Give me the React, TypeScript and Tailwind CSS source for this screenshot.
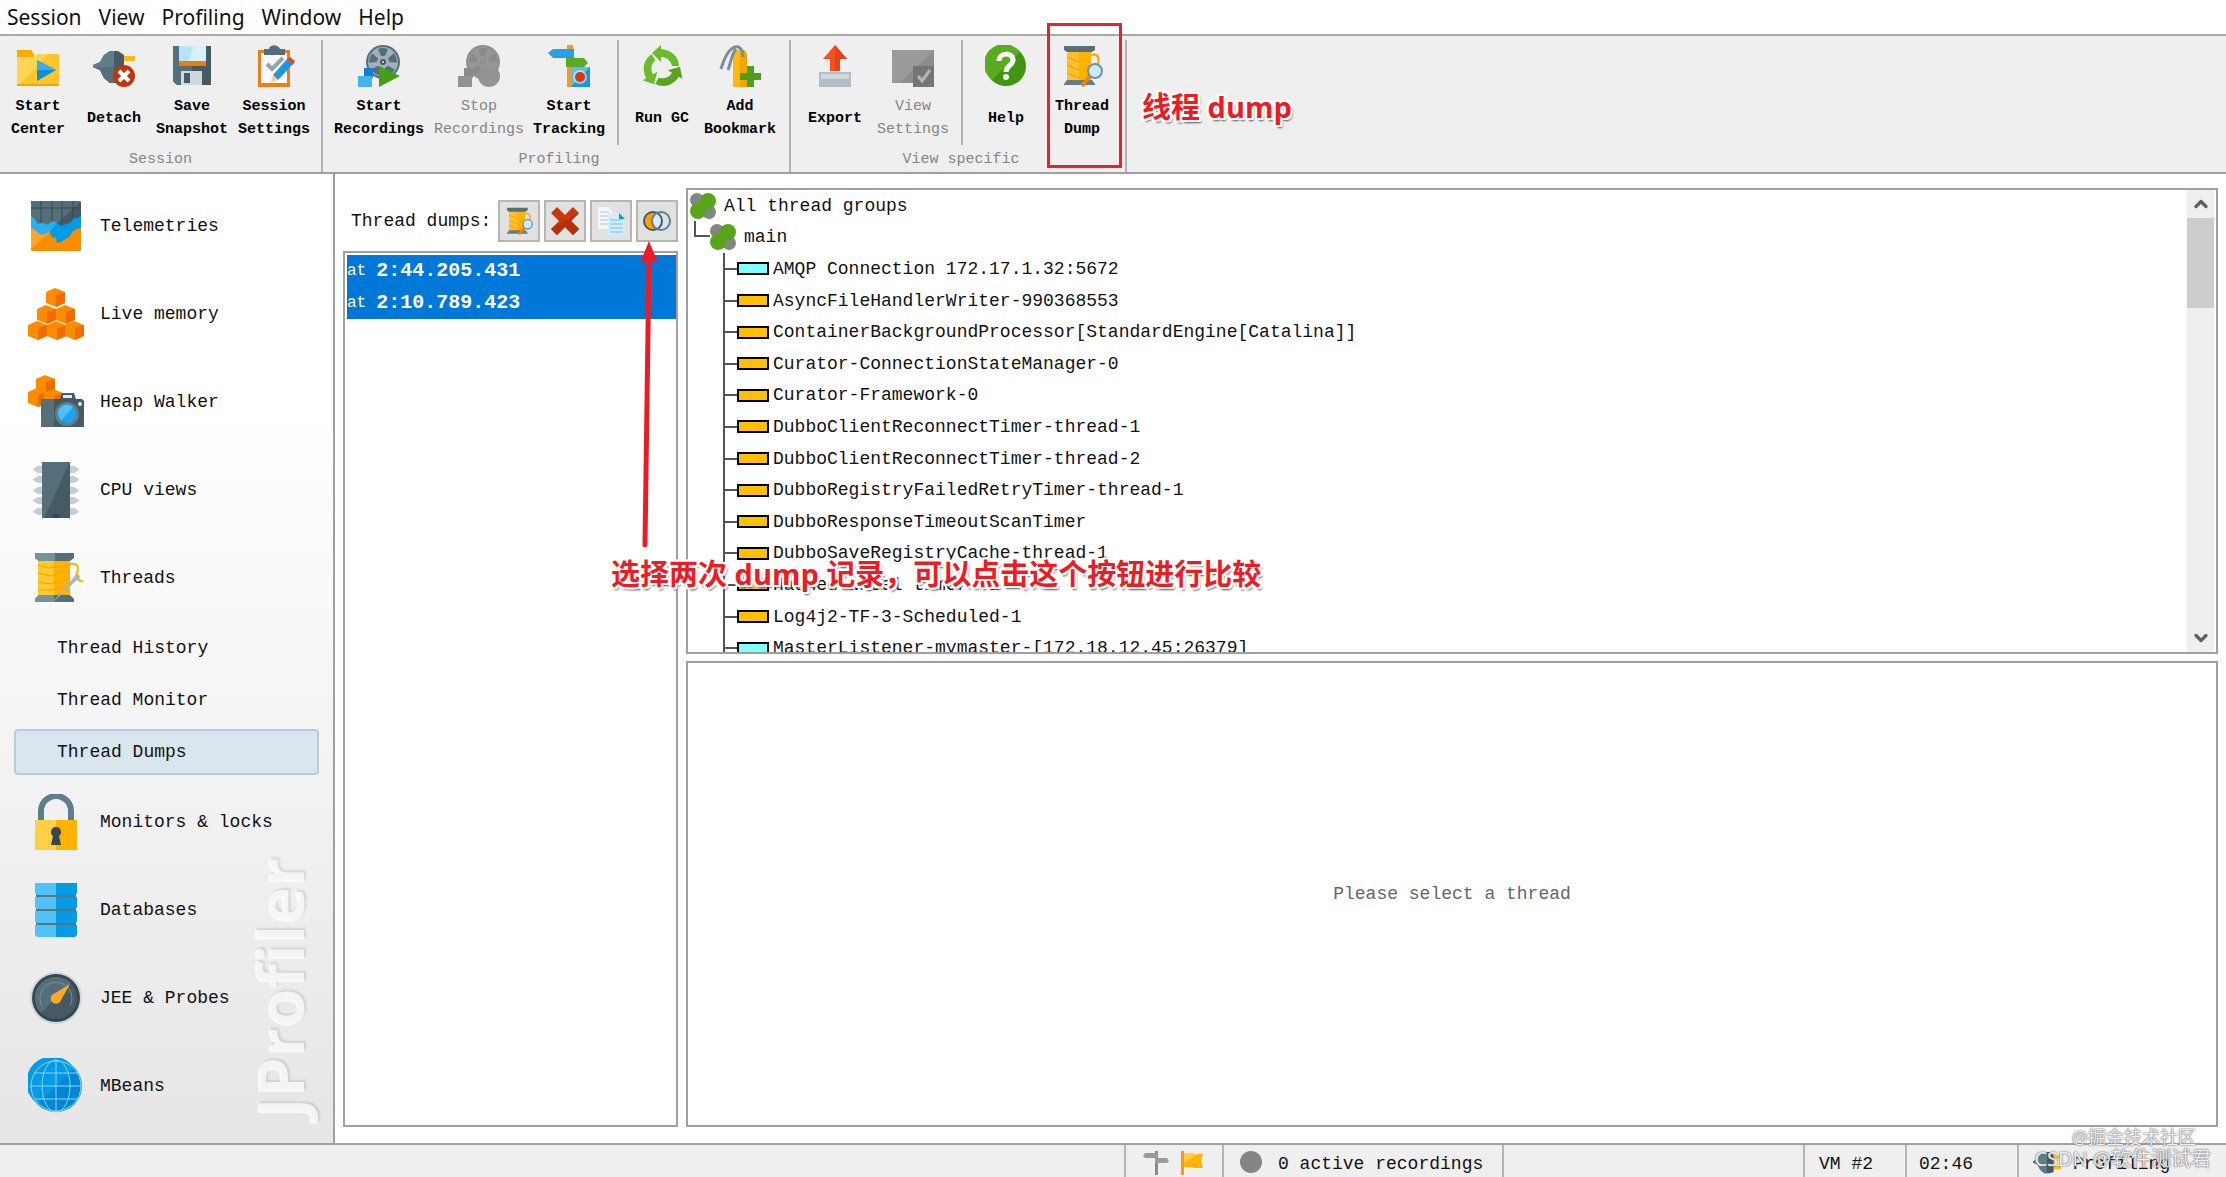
import React, { useState } from 'react';
import { ChevronUp, ChevronDown } from 'lucide-react';

/* ---------- toolbar icons ---------- */

const FolderPlay = () => (
  <svg viewBox="0 0 42 42" className="h-[42px] w-[42px]">
    <path d="M0 5h14l3 4v4H0z" fill="#f9ab00" />
    <path d="M0 12h17l3-3h22v31H0z" fill="#ffc629" />
    <path d="M0 12h17l3-3h11L3 40H0z" fill="#ffd557" />
    <path d="M0 39h42v2H0z" fill="#f0a800" />
    <path d="M20 15l19 10-19 11z" fill="#0a8fdb" />
    <path d="M20 15l19 10H20z" fill="#3badea" />
  </svg>
);

const Plug = () => (
  <svg viewBox="0 0 42 42" className="h-[42px] w-[42px]">
    <path d="M31 11h11v5H31z" fill="#fbb917" />
    <path d="M0 20l7-3 4-7 6-4h8l6 4v26l-6 2h-8l-6-5-4-8-7-3z" fill="#455a64" />
    <path d="M0 20l7-3 4-7 6-4h4v32h-4l-6-5-4-8-7-3z" fill="#607d8b" />
    <path d="M0 22h21v16h-4l-6-5-4-8-7-3z" fill="#546e7a" />
  </svg>
);

const DetachIcon = () => (
  <div className="relative">
    <Plug />
    <svg viewBox="0 0 22 22" className="absolute right-0 bottom-0 h-[22px] w-[22px]">
      <circle cx="11" cy="11" r="11" fill="#bf360c" />
      <path d="M6 6l10 10M16 6L6 16" stroke="#fff" strokeWidth="4" />
    </svg>
  </div>
);

const Floppy = () => (
  <svg viewBox="0 0 42 42" className="h-[42px] w-[42px]">
    <path d="M2 1h38v39H6l-4-4z" fill="#455a64" />
    <path d="M2 1h19v39H6l-4-4z" fill="#546e7a" />
    <path d="M8 1h27v16H8z" fill="#b3e5fc" />
    <path d="M22 1h13v16H18z" fill="#d4f1fc" />
    <path d="M8 16h27v5H8z" fill="#ef7d00" />
    <path d="M10 26h21v14H10z" fill="#cfd8dc" />
    <path d="M13 28h6v10h-6z" fill="#455a64" />
  </svg>
);

const Clipboard = () => (
  <svg viewBox="0 0 42 42" className="h-[42px] w-[42px]">
    <path d="M5 5h32v37H5z" fill="#ef7d1a" />
    <path d="M8 8h26v30H8z" fill="#fafafa" />
    <path d="M11 10V4h5c1-5 9-5 11 0h5v6z" fill="#546e7a" />
    <path d="M14 19l5 5 11-11" stroke="#90a4ae" strokeWidth="4" fill="none" />
    <path d="M20 30L34 14l6 5-15 16z" fill="#1e96e0" />
    <path d="M34 14l3-2 5 4-2 4z" fill="#e64a19" />
    <path d="M20 30l5 5-7 2z" fill="#ffcc80" />
  </svg>
);

const Reel = ({ gray = false }: { gray?: boolean }) => (
  <svg viewBox="0 0 42 42" className="h-[42px] w-[42px]">
    <circle cx="25" cy="17" r="17" fill={gray ? '#8f8f8f' : '#546e7a'} />
    <circle cx="25" cy="17" r="15" fill={gray ? '#979797' : '#9fb1ba'} />
    {[0, 72, 144, 216, 288].map((a) => (
      <path key={a} d="M20 4q5-2 10 0l-3 7h-4z" fill={gray ? '#8b8b8b' : '#546e7a'} transform={`rotate(${a} 25 17)`} />
    ))}
    <circle cx="25" cy="17" r="3" fill={gray ? '#8b8b8b' : '#455a64'} />
    <circle cx="25" cy="17" r="1" fill={gray ? '#a0a0a0' : '#dde6ea'} />
    <path d="M6 23l9 9v-9z" fill={gray ? '#8a8a8a' : '#0277bd'} />
    <path d="M6 23h9v10H6z" fill={gray ? '#8a8a8a' : '#1481ca'} />
    <path d="M0 31h14v11H0z" fill={gray ? '#929292' : '#42b4f0'} />
    {gray ? <circle cx="31" cy="31" r="11" fill="#939393" /> : <path d="M21 21l21 10-21 11z" fill="#43a012" />}
  </svg>
);

const Signpost = () => (
  <svg viewBox="0 0 42 42" className="h-[42px] w-[42px]">
    <path d="M19 0h6v42h-6z" fill="#f59b23" />
    <path d="M5 4h21v9H5L0 8z" fill="#2a9fe4" />
    <path d="M18 13h18l4 5-4 4H18z" fill="#5aaa22" />
    <path d="M23 22h19v20H23z" fill="#1a94dc" />
    <path d="M23 22h19L23 42z" fill="#57bdf2" />
    <circle cx="32" cy="32" r="7" fill="#fff" opacity=".5" />
    <circle cx="32" cy="32" r="5" fill="#d8380c" />
  </svg>
);

const Recycle = () => (
  <svg viewBox="0 0 42 42" className="h-[42px] w-[42px]">
    {[0, 120, 240].map((a) => (
      <path
        key={a}
        d="M11 8L20 0v4C31 5 38 12 38 21h-7C30 16 26 12 20 12v5z"
        fill={a === 120 ? '#58a61d' : '#6cbb2c'}
        transform={`rotate(${a} 21 23)`}
      />
    ))}
  </svg>
);

const Bookmark = () => (
  <svg viewBox="0 0 42 42" className="h-[42px] w-[42px]">
    <path d="M14 9l4-4h7l3 4v33H14z" fill="#fdb813" />
    <path d="M21 5h4l3 4v33h-7z" fill="#f5a300" />
    <path d="M24 12C24 4 20 1 16 2 9 4 5 14 2 24M17 4c-5 6-5 14-8 21" stroke="#78909c" strokeWidth="3" fill="none" />
    <path d="M28 21h7v7h7v7h-7v7h-7v-7h-7v-7h7z" fill="#4d9f1a" />
  </svg>
);

const ExportIcon = () => (
  <svg viewBox="0 0 42 42" className="h-[42px] w-[42px]">
    <path d="M5 27h32v15H5z" fill="#b0bec5" />
    <path d="M7 29h28v5H7z" fill="#cfd8dc" />
    <path d="M21 0l12 14h-7v12H16V14H9z" fill="#f4511e" />
    <path d="M21 0l12 14h-7v12h-5z" fill="#e0461a" />
  </svg>
);

const ViewSettings = () => (
  <svg viewBox="0 0 42 42" className="h-[42px] w-[42px]">
    <path d="M0 5h42v33H0z" fill="#8c8c8c" />
    <path d="M0 5h42L8 38H0z" fill="#9a9a9a" />
    <path d="M21 21h21v21H21z" fill="#757575" />
    <path d="M26 31l4 5 8-11" stroke="#b5b5b5" strokeWidth="3" fill="none" />
  </svg>
);

const HelpIcon = () => (
  <svg viewBox="0 0 42 42" className="h-[42px] w-[42px]">
    <circle cx="21" cy="21" r="20" fill="#3f9710" />
    <path d="M35 7A20 20 0 1 0 7 35z" fill="#57ac20" />
    <path d="M14 16c0-9 14-9 14-1 0 5-7 6-7 12" stroke="#fff" strokeWidth="5" fill="none" />
    <circle cx="21" cy="32" r="3" fill="#fff" />
  </svg>
);

const SpoolSearch = ({ className = 'h-[42px] w-[42px]' }: { className?: string }) => (
  <svg viewBox="0 0 42 42" className={className}>
    <path d="M6 5h24v32H6z" fill="#ffb300" />
    <path d="M6 5h12v32H6z" fill="#ffc02e" />
    <path d="M6 12l12 5M6 20l12 5M6 28l12 5" stroke="#f09a00" strokeWidth="1" />
    <path d="M3 1h31v4l-3 2H6L3 5z" fill="#546e7a" />
    <path d="M3 39l3-4h25l3 4v1H3z" fill="#607d8b" />
    <path d="M30 10c8-2 8 4 7 10" stroke="#f5a200" strokeWidth="2" fill="none" />
    <path d="M29 31l-8 10" stroke="#ef7d1a" strokeWidth="4" />
    <circle cx="34" cy="26" r="7" fill="#c5ecfb" stroke="#78909c" strokeWidth="2" />
  </svg>
);

/* ---------- sidebar icons ---------- */

const Telemetries = () => (
  <svg viewBox="0 0 56 56" className="h-14 w-14 shrink-0">
    <rect x="3" y="3" width="50" height="50" rx="2" fill="#455a64" />
    <path d="M3 3h50L20 34H3z" fill="#546e7a" />
    <path d="M3 10h50M13 3v22M24 3v22M34 3v22M45 3v22" stroke="#37474f" />
    <path d="M3 18l4 3 3 5 5-1 4 2 6-4 4 2 4 3 5-2 4-1 4-5h3l4-2v30H3z" fill="#039be5" />
    <path d="M3 18l4 3 3 5 5-1 4 2 6-4 4 2-14 16H3z" fill="#29b0f0" />
    <path d="M3 30l4 2 3 3 4 2 4-1 3-3 3 6 4 1 1 5 4-1 3-2 5-3 4-6 4-2 4-1v21a2 2 0 0 1-2 2H5a2 2 0 0 1-2-2z" fill="#fb8c00" />
    <path d="M3 30l4 2 3 3 4 2 4-1 3-3v2L3 51z" fill="#ffa32b" />
  </svg>
);

const Cube = ({ x, y }: { x: number; y: number }) => (
  <g transform={`translate(${x} ${y})`}>
    <path d="M0 4l9-4 10 4v11l-9 4-10-4z" fill="#fb8c00" />
    <path d="M10 7l9-3v11l-9 4z" fill="#ef6c00" />
  </g>
);

const LiveMemory = () => (
  <svg viewBox="0 0 56 56" className="h-14 w-14 shrink-0">
    <Cube x={18} y={2} />
    <Cube x={9} y={19} />
    <Cube x={28} y={19} />
    <Cube x={0} y={35} />
    <Cube x={19} y={35} />
    <Cube x={37} y={35} />
  </svg>
);

const HeapWalker = () => (
  <svg viewBox="0 0 56 56" className="h-14 w-14 shrink-0">
    <Cube x={8} y={1} />
    <Cube x={0} y={14} />
    <Cube x={16} y={15} />
    <path d="M14 25h18l2-6h12l2 6h6l2 2v26H13V27z" fill="#455a64" />
    <path d="M14 25h12v28H13V27z" fill="#546e7a" />
    <path d="M35 21h9v3h-9z" fill="#e5ebee" />
    <circle cx="39" cy="40" r="12" fill="#607d8b" />
    <circle cx="39" cy="40" r="9" fill="#1ba4ec" />
    <path d="M30 40a9 9 0 0 1 15-7L33 47z" fill="#4cc0f8" />
    <circle cx="52" cy="30" r="2" fill="#dfe5e8" />
  </svg>
);

const CpuViews = () => (
  <svg viewBox="0 0 56 56" className="h-14 w-14 shrink-0">
    {[7, 17, 28, 38, 49].map((y) => (
      <path key={y} d={`M5 ${y}l5-3h36l5 3v1l-5 3H10l-5-3z`} fill="#c3ced3" />
    ))}
    <path d="M14 0h28v56H14z" fill="#455a64" />
    <path d="M14 0h28L16 56h-2z" fill="#546e7a" />
    <path d="M24 56a4 4 0 0 1 8 0z" fill="#37474f" />
  </svg>
);

const Threads = () => (
  <svg viewBox="0 0 56 56" className="h-14 w-14 shrink-0">
    <path d="M10 8h32v38H10z" fill="#ffb300" />
    <path d="M10 8h16v38H10z" fill="#ffc933" />
    <path d="M10 15l10 3 20-2M10 23l12 3 18-5M10 32l13 2 18-5M10 40l14 0 17-4" stroke="#f3a200" strokeWidth="1" fill="none" />
    <path d="M7 3h39v5l-4 3H11L7 8z" fill="#546e7a" />
    <path d="M7 3h20v8H11L7 8z" fill="#78909c" />
    <path d="M7 52v-3l4-4h31l4 4v3z" fill="#546e7a" />
    <path d="M7 52v-3l4-4h15v7z" fill="#78909c" />
    <path d="M42 14c11-2 8 7 6 12-1 5 4 3 7 6" stroke="#ffb300" strokeWidth="2" fill="none" />
    <path d="M24 53l23-27 4-2 1 4-3 2z" fill="#a9b7bd" />
  </svg>
);

const Lock = () => (
  <svg viewBox="0 0 56 56" className="h-14 w-14 shrink-0">
    <path d="M13 28V17a15 15 0 0 1 30 0v11" stroke="#607d8b" strokeWidth="6" fill="none" />
    <path d="M7 26h21v30H7z" fill="#ffcf45" />
    <path d="M28 26h21v30H28z" fill="#ffb300" />
    <path d="M28 33a5 5 0 0 1 3 9l2 9H23l2-9a5 5 0 0 1 3-9z" fill="#37474f" />
  </svg>
);

const Databases = () => (
  <svg viewBox="0 0 56 56" className="h-14 w-14 shrink-0">
    <path d="M8 4h40v46H8z" fill="#5a7480" />
    {[0, 14, 28, 42].map((y) => (
      <g key={y} transform={`translate(0 ${y})`}>
        <path d="M7 1h21v12H9l-2-2z" fill="#4fc3f7" />
        <path d="M28 1h21v10l-2 2H28z" fill="#039be5" />
      </g>
    ))}
  </svg>
);

const Probes = () => (
  <svg viewBox="0 0 56 56" className="h-14 w-14 shrink-0">
    <circle cx="28" cy="28" r="26" fill="#cfd8dc" />
    <circle cx="28" cy="28" r="24" fill="#37474f" />
    <circle cx="28" cy="28" r="21" fill="#455a64" />
    <path d="M13 43A21 21 0 0 1 43 13z" fill="#546e7a" />
    <path d="M14 36A16 16 0 1 1 42 36" stroke="#78909c" strokeWidth="1" fill="none" />
    <path d="M24 25l18-11-10 18a5 5 0 1 1-8-7z" fill="#ffa726" />
  </svg>
);

const MBeans = () => (
  <svg viewBox="0 0 56 56" className="h-14 w-14 shrink-0">
    <circle cx="28" cy="28" r="26" fill="#0288d1" />
    <path d="M46 10A26 26 0 1 0 10 46z" fill="#039be5" />
    <g stroke="#8bd5f8" strokeWidth="1" fill="none">
      <circle cx="28" cy="28" r="25" />
      <ellipse cx="28" cy="28" rx="14" ry="26" />
      <path d="M28 2v52M2 28h52M6 15h44M6 41h44" />
    </g>
  </svg>
);

/* ---------- small icons ---------- */

const DeleteIcon = () => (
  <svg viewBox="0 0 28 28" className="h-7 w-7">
    <path d="M0 6l6-6 8 8 8-8 6 6-8 8 8 8-6 6-8-8-8 8-6-6 8-8z" fill="#c9370a" />
    <path d="M28 6l-8 8 8 8-6 6-8-8-8 8-6-6z" fill="#b5300a" />
  </svg>
);

const CopyIcon = () => (
  <svg viewBox="0 0 28 28" className="h-7 w-7">
    <path d="M1 0h10l5 5v17H1z" fill="#f2f6f8" />
    <path d="M3 5h9M3 9h9M3 13h9M3 17h9" stroke="#b4c2c8" />
    <path d="M11 6h11l6 6v16H11z" fill="#d3eefb" />
    <path d="M22 6l6 6h-6z" fill="#039be5" />
    <path d="M13 13h12M13 17h13M13 21h13M13 25h13" stroke="#6cc3ea" />
  </svg>
);

const CompareIcon = () => (
  <svg viewBox="0 0 28 28" className="h-7 w-7">
    <circle cx="10" cy="14" r="9" fill="#ffa000" />
    <circle cx="18" cy="14" r="9" fill="#dde4e7" />
    <path d="M14 6a9 9 0 0 1 0 16 9 9 0 0 1 0-16z" fill="#d4eefa" />
    <circle cx="10" cy="14" r="9" fill="none" stroke="#455a64" strokeWidth="2" />
    <circle cx="18" cy="14" r="9" fill="none" stroke="#607d8b" strokeWidth="2" />
  </svg>
);

const GroupIcon = () => (
  <svg viewBox="0 0 26 26" className="h-[26px] w-[26px] shrink-0">
    <circle cx="7" cy="7" r="7" fill="#858585" />
    <circle cx="19" cy="19" r="7" fill="#858585" />
    <circle cx="18" cy="8" r="8" fill="#58a618" />
    <circle cx="8" cy="18" r="8" fill="#58a618" />
  </svg>
);

/* ---------- data ---------- */

type Tool = { lines: string[]; icon: React.ReactNode; width: string; disabled?: boolean };

const groups: { name: string; width: string; sections: Tool[][] }[] = [
  {
    name: 'Session',
    width: 'w-[323px]',
    sections: [[
      { lines: ['Start', 'Center'], icon: <FolderPlay />, width: 'w-[76px]' },
      { lines: ['Detach'], icon: <DetachIcon />, width: 'w-[76px]' },
      { lines: ['Save', 'Snapshot'], icon: <Floppy />, width: 'w-20' },
      { lines: ['Session', 'Settings'], icon: <Clipboard />, width: 'w-[84px]' },
    ]],
  },
  {
    name: 'Profiling',
    width: 'w-[468px] pl-[6px]',
    sections: [
      [
        { lines: ['Start', 'Recordings'], icon: <Reel />, width: 'w-[100px]' },
        { lines: ['Stop', 'Recordings'], icon: <Reel gray />, width: 'w-[100px]', disabled: true },
        { lines: ['Start', 'Tracking'], icon: <Signpost />, width: 'w-20' },
      ],
      [
        { lines: ['Run GC'], icon: <Recycle />, width: 'w-[76px]' },
        { lines: ['Add', 'Bookmark'], icon: <Bookmark />, width: 'w-20' },
      ],
    ],
  },
  {
    name: 'View specific',
    width: 'w-[336px] pl-[6px]',
    sections: [
      [
        { lines: ['Export'], icon: <ExportIcon />, width: 'w-[76px]' },
        { lines: ['View', 'Settings'], icon: <ViewSettings />, width: 'w-20', disabled: true },
      ],
      [
        { lines: ['Help'], icon: <HelpIcon />, width: 'w-[76px]' },
        { lines: ['Thread', 'Dump'], icon: <SpoolSearch />, width: 'w-[76px]' },
      ],
    ],
  },
];

const topViews = [
  { label: 'Telemetries', icon: <Telemetries /> },
  { label: 'Live memory', icon: <LiveMemory /> },
  { label: 'Heap Walker', icon: <HeapWalker /> },
  { label: 'CPU views', icon: <CpuViews /> },
  { label: 'Threads', icon: <Threads /> },
];

const threadViews = ['Thread History', 'Thread Monitor', 'Thread Dumps'];

const bottomViews = [
  { label: 'Monitors & locks', icon: <Lock /> },
  { label: 'Databases', icon: <Databases /> },
  { label: 'JEE & Probes', icon: <Probes /> },
  { label: 'MBeans', icon: <MBeans /> },
];

const dumps = ['2:44.205.431', '2:10.789.423'];

const threads = [
  { name: 'AMQP Connection 172.17.1.32:5672', net: true },
  { name: 'AsyncFileHandlerWriter-990368553' },
  { name: 'ContainerBackgroundProcessor[StandardEngine[Catalina]]' },
  { name: 'Curator-ConnectionStateManager-0' },
  { name: 'Curator-Framework-0' },
  { name: 'DubboClientReconnectTimer-thread-1' },
  { name: 'DubboClientReconnectTimer-thread-2' },
  { name: 'DubboRegistryFailedRetryTimer-thread-1' },
  { name: 'DubboResponseTimeoutScanTimer' },
  { name: 'DubboSaveRegistryCache-thread-1' },
  { name: 'Hashed wheel timer #1' },
  { name: 'Log4j2-TF-3-Scheduled-1' },
  { name: 'MasterListener-mymaster-[172.18.12.45:26379]', net: true },
];

/* ---------- parts ---------- */

const ToolButton = ({ tool }: { tool: Tool }) => (
  <button
    disabled={tool.disabled}
    className={`flex flex-col items-center gap-2 pt-[5px] ${tool.width} ${tool.disabled ? 'text-[#858585]' : 'font-bold text-black'}`}
  >
    {tool.icon}
    <span className="flex h-[46px] flex-col justify-center text-[15px] leading-[23px]">
      {tool.lines.map((line) => <span key={line}>{line}</span>)}
    </span>
  </button>
);

const Toolbar = () => (
  <div className="flex shrink-0 border-b-2 border-[#a0a0a0] bg-[#efefef] pt-1">
    {groups.map((group) => (
      <div key={group.name} className={`flex flex-col border-r-2 border-[#b0b0b0] ${group.width}`}>
        <div className="flex h-[105px]">
          {group.sections.map((section, i) => (
            <div key={i} className={i === 0 ? 'flex' : 'ml-2 flex border-l-2 border-[#b0b0b0] pl-[5px]'}>
              {section.map((tool) => <ToolButton key={tool.lines.join(' ')} tool={tool} />)}
            </div>
          ))}
        </div>
        <div className="pt-[3px] text-center text-[15px] leading-6 text-[#858585]">{group.name}</div>
      </div>
    ))}
  </div>
);

const ViewLink = ({ label, icon }: { label: string; icon: React.ReactNode }) => (
  <a href="#" className="flex h-[88px] items-center gap-4 pl-7">
    {icon}
    <span>{label}</span>
  </a>
);

const Sidebar = () => {
  const [active, setActive] = useState('Thread Dumps');

  return (
    <nav className="relative w-[335px] shrink-0 overflow-hidden border-r-2 border-[#a0a0a0] bg-linear-to-b from-white from-25% to-[#e6e6e6] pt-2">
      <div className="absolute right-[10px] bottom-6 rotate-180 font-['Open_Sans',sans-serif] text-[64px] leading-[86px] font-bold text-white/75 [text-shadow:2px_2px_2px_rgba(0,0,0,0.1)] [writing-mode:vertical-rl]">
        JProfiler
      </div>
      <div className="relative">
        {topViews.map((v) => <ViewLink key={v.label} {...v} />)}
        {threadViews.map((label) => (
          <div key={label} className="flex h-[52px] items-center px-[14px]">
            <button
              onClick={() => setActive(label)}
              className={`h-[46px] w-[305px] rounded-sm border-2 pl-[41px] text-left ${active === label ? 'border-[#b4cede] bg-[#dae6ee]' : 'border-transparent'}`}
            >
              {label}
            </button>
          </div>
        ))}
        {bottomViews.map((v) => <ViewLink key={v.label} {...v} />)}
      </div>
    </nav>
  );
};

const dumpTools = [
  { label: 'Take thread dump', icon: <SpoolSearch className="h-7 w-7" /> },
  { label: 'Delete', icon: <DeleteIcon /> },
  { label: 'Copy', icon: <CopyIcon /> },
  { label: 'Compare', icon: <CompareIcon /> },
];

const DumpList = () => (
  <section className="flex w-[335px] shrink-0 flex-col">
    <div className="flex h-[63px] items-center justify-between pt-[2px] pl-2">
      <span>Thread dumps:</span>
      <div className="flex gap-1">
        {dumpTools.map((t) => (
          <button key={t.label} aria-label={t.label} className="flex h-[42px] w-[42px] items-center justify-center border-2 border-[#b5b5b5] bg-[#e1e1e1]">
            {t.icon}
          </button>
        ))}
      </div>
    </div>
    <ul className="flex-1 border-2 border-[#a0a0a0] p-[2px] pr-0">
      {dumps.map((time) => (
        <li key={time} className="flex h-8 items-center gap-[10px] bg-[#0078d7] text-white">
          <span className="text-base">at</span>
          <span className="text-xl font-bold">{time}</span>
        </li>
      ))}
    </ul>
  </section>
);

const ThreadTree = () => (
  <section className="flex min-h-0 flex-1 overflow-hidden border-2 border-[#a0a0a0]">
    <div className="grid h-[474px] flex-1 auto-rows-fr">
      <div className="flex items-center gap-2 pl-[2px]">
        <GroupIcon />
        <span>All thread groups</span>
      </div>
      <div className="flex items-center pl-[6px]">
        <span className="mb-4 h-4 w-4 border-b-2 border-l-2 border-[#555]" />
        <GroupIcon />
        <span className="pl-2">main</span>
      </div>
      {threads.map((t) => (
        <div key={t.name} className="ml-[35px] flex items-center border-l-2 border-[#555]">
          <span className="h-[2px] w-3 bg-[#555]" />
          <span className={`h-[13px] w-8 border-2 border-black ${t.net ? 'bg-[#80ffff]' : 'bg-[#ffc000]'}`} />
          <span className="pl-1 whitespace-nowrap">{t.name}</span>
        </div>
      ))}
    </div>
    <div className="mr-[2px] flex w-[27px] flex-col items-center bg-[#efefef] text-[#606060]">
      <button aria-label="Scroll up" className="flex h-7 items-center"><ChevronUp size={20} strokeWidth={4} /></button>
      <div className="h-[90px] w-full bg-[#cdcdcd]" />
      <button aria-label="Scroll down" className="mt-auto flex h-7 items-center"><ChevronDown size={20} strokeWidth={4} /></button>
    </div>
  </section>
);

const StatusBar = () => (
  <footer className="flex h-[34px] shrink-0 overflow-hidden border-t-2 border-[#a0a0a0] bg-[#efefef]">
    <div className="flex-1" />
    <div className="flex w-[98px] items-center gap-3 border-l-2 border-[#b5b5b5] pt-1 pl-[17px]">
      <svg viewBox="0 0 26 24" className="h-6 w-[26px]">
        <path d="M12 0h3v24h-3z" fill="#8a8a8a" />
        <path d="M2 2h13v5H2L0 5zM12 7h12l2 3-2 2H12z" fill="#9a9a9a" />
      </svg>
      <svg viewBox="0 0 22 24" className="h-6 w-[22px]">
        <path d="M0 0h3v24H0z" fill="#f39a1e" />
        <path d="M3 2h8l2 1h9l-2 7 2 7h-9l-2-1H3z" fill="#ffb300" />
        <path d="M3 2h8l2 1h4L3 12z" fill="#ffcb45" />
      </svg>
    </div>
    <div className="flex w-[280px] items-center gap-4 border-l-2 border-[#b5b5b5] pt-[6px] pl-4">
      <span className="-mt-1 h-[22px] w-[22px] rounded-full bg-[#858585]" />
      <span>0 active recordings</span>
    </div>
    <div className="w-[301px] border-l-2 border-[#b5b5b5]" />
    <div className="flex w-[102px] items-center border-l-2 border-[#b5b5b5] pt-[6px] pl-[14px]">VM #2</div>
    <div className="flex w-28 items-center border-l-2 border-[#b5b5b5] pt-[6px] pl-3">02:46</div>
    <div className="flex w-[209px] items-center gap-3 border-l-2 border-[#b5b5b5] pt-[6px] pl-[14px]">
      <svg viewBox="0 0 42 42" className="-mt-1 h-[28px] w-[28px]">
        <path d="M31 11h11v5H31zM31 27h11v5H31z" fill="#fbb917" />
        <path d="M0 20l7-3 4-7 6-4h8l6 4v26l-6 2h-8l-6-5-4-8-7-3z" fill="#455a64" />
        <path d="M0 20l7-3 4-7 6-4h4v32h-4l-6-5-4-8-7-3z" fill="#607d8b" />
      </svg>
      <span>Profiling</span>
    </div>
  </footer>
);

const noteText =
  "absolute font-['Open_Sans','Noto_Sans_CJK_SC',sans-serif] text-[29px] leading-10 font-bold whitespace-nowrap text-[#ed1c24] [text-shadow:-2px_0_#fff,2px_0_#fff,0_-2px_#fff,0_2px_#fff,2px_2px_#fff,-2px_-2px_#fff,2px_-2px_#fff,-2px_2px_#fff,2px_3px_2px_#555]";

const Notes = () => (
  <div className="pointer-events-none">
    <div className="absolute top-[23px] left-[1047px] h-[145px] w-[75px] border-[3px] border-[#e3262b]" />
    <p className={`${noteText} top-[87px] left-[1142px]`}>线程 dump</p>
    <svg viewBox="0 0 24 310" className="absolute top-[241px] left-[638px] h-[310px] w-6">
      <path d="M11 18L7 304" stroke="#ed1c24" strokeWidth="5" strokeLinecap="round" />
      <path d="M11 0l9 22-9-3-9 3z" fill="#ed1c24" />
    </svg>
    <p className={`${noteText} top-[554px] left-[611px]`}>选择两次 dump 记录，可以点击这个按钮进行比较</p>
  </div>
);

const watermark =
  "font-['Noto_Sans','Noto_Sans_CJK_SC',sans-serif] leading-6 whitespace-nowrap text-white/90 [text-shadow:0_0_1px_#555,0_0_2px_#777]";

const App = () => (
  <div className="relative flex h-screen flex-col overflow-hidden bg-white font-['Liberation_Mono','Noto_Sans_CJK_SC',monospace] text-lg leading-6 text-[#111]">
    <div className="flex h-9 shrink-0 items-center gap-[17px] border-b-2 border-[#a8a8a8] pl-[7px] font-['Noto_Sans',sans-serif] text-[21px]">
      {['Session', 'View', 'Profiling', 'Window', 'Help'].map((m) => <button key={m}>{m}</button>)}
    </div>
    <Toolbar />
    <div className="flex min-h-0 flex-1">
      <Sidebar />
      <main className="flex min-w-0 flex-1 gap-2 pt-[14px] pr-2 pb-4 pl-2">
        <DumpList />
        <div className="flex min-w-0 flex-1 flex-col gap-[7px]">
          <ThreadTree />
          <section className="flex flex-1 items-center justify-center border-2 border-[#a0a0a0] text-[#666]">
            Please select a thread
          </section>
        </div>
      </main>
    </div>
    <StatusBar />
    <Notes />
    <div className={`absolute right-[30px] bottom-[28px] text-lg ${watermark}`}>@掘金技术社区</div>
    <div className={`absolute right-[15px] bottom-[6px] text-xl ${watermark}`}>CSDN @软件测试君</div>
  </div>
);

export default App;
